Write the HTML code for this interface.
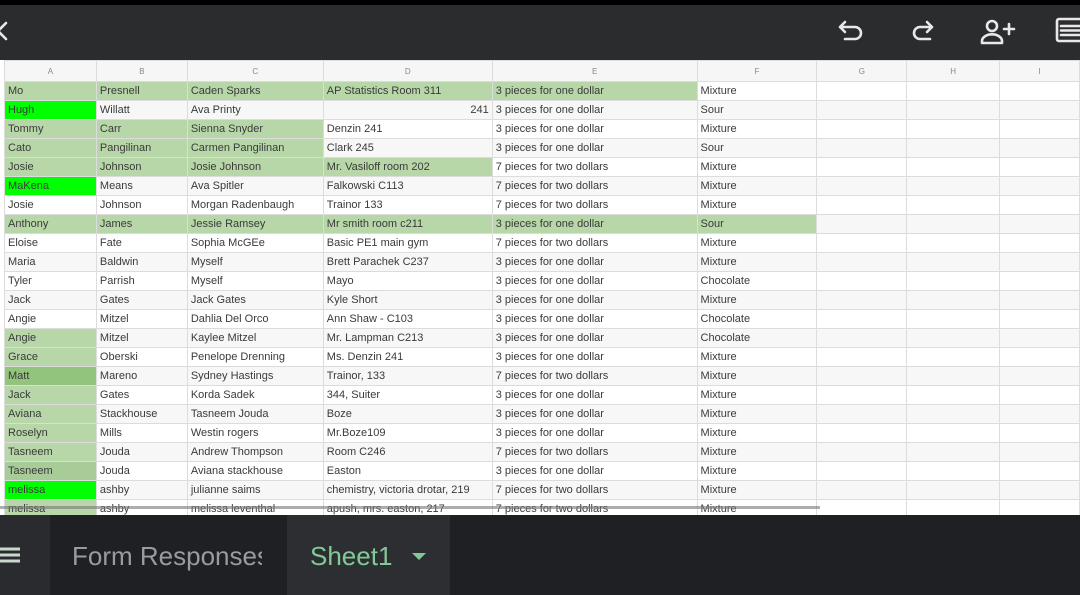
<!DOCTYPE html>
<html><head><meta charset="utf-8"><style>
*{margin:0;padding:0;box-sizing:border-box}
body{width:1080px;height:595px;overflow:hidden;background:#202124;font-family:"Liberation Sans",Arial,sans-serif;position:relative}
#top{position:absolute;left:0;top:0;width:1080px;height:5px;background:#000}
#bar{position:absolute;left:0;top:5px;width:1080px;height:55px;background:#2b2c2e}
#grid{position:absolute;left:0;top:60px;width:1080px;height:455px;background:#fff;overflow:hidden}
table{border-collapse:collapse;table-layout:fixed;position:absolute;left:4px;top:0}
td{height:19px;border:1px solid #dcdcdc;font-size:11px;color:#3a3a3a;padding:1px 3px 0;white-space:nowrap;overflow:hidden;line-height:17px}
tr.h td{height:21px;background:#f6f6f6;color:#888;font-size:8px;text-align:center}
tr:nth-child(odd):not(.h) td{background:#f7f7f7}
td.g,tr td.g{background:#b7d7a8!important}
td.b{background:#00ff00!important}
td.d{background:#93c47d!important}
#bot{position:absolute;left:0;top:515px;width:1080px;height:80px;background:#1f2023}
</style></head><body>
<div id="top"></div>
<div id="bar">
<svg width="1080" height="55" style="position:absolute;left:0;top:0" fill="none" stroke="#e8e8e8" stroke-width="2.6" stroke-linecap="round" stroke-linejoin="round">
<path d="M6 18 L-2 26 L6 34"/>
<path d="M845 17 L840 22 L845 27 M840 22 H855 a6 6 0 0 1 0 12 H845"/>
<path d="M927 17 L932 22 L927 27 M932 22 H920 a6 6 0 0 0 0 12 H930"/>
<circle cx="992" cy="21" r="5"/><path d="M982 38 v-2 a9 6 0 0 1 20 0 v2 z"/><path d="M1004 24 h10 M1009 19 v10"/>
<rect x="1057" y="14" width="26" height="22" rx="2"/><path d="M1061 21 h20 M1061 25.5 h20 M1061 30 h20"/>
</svg>
</div>
<div id="grid"><table>
<colgroup><col style="width:92px"><col style="width:91px"><col style="width:136px"><col style="width:169px"><col style="width:205px"><col style="width:120px"><col style="width:90px"><col style="width:93px"><col style="width:80px"></colgroup>
<tr class="h"><td>A</td><td>B</td><td>C</td><td>D</td><td>E</td><td>F</td><td>G</td><td>H</td><td>I</td></tr>
<tr><td class="g">Mo</td><td class="g">Presnell</td><td class="g">Caden Sparks</td><td class="g">AP Statistics Room 311</td><td class="g">3 pieces for one dollar</td><td>Mixture</td><td></td><td></td><td></td></tr>
<tr><td class="b">Hugh</td><td>Willatt</td><td>Ava Printy</td><td style="text-align:right">241</td><td>3 pieces for one dollar</td><td>Sour</td><td></td><td></td><td></td></tr>
<tr><td class="g">Tommy</td><td class="g">Carr</td><td class="g">Sienna Snyder</td><td>Denzin 241</td><td>3 pieces for one dollar</td><td>Mixture</td><td></td><td></td><td></td></tr>
<tr><td class="g">Cato</td><td class="g">Pangilinan</td><td class="g">Carmen Pangilinan</td><td>Clark 245</td><td>3 pieces for one dollar</td><td>Sour</td><td></td><td></td><td></td></tr>
<tr><td class="g">Josie</td><td class="g">Johnson</td><td class="g">Josie Johnson</td><td class="g">Mr. Vasiloff room 202</td><td>7 pieces for two dollars</td><td>Mixture</td><td></td><td></td><td></td></tr>
<tr><td class="b">MaKena</td><td>Means</td><td>Ava Spitler</td><td>Falkowski C113</td><td>7 pieces for two dollars</td><td>Mixture</td><td></td><td></td><td></td></tr>
<tr><td>Josie</td><td>Johnson</td><td>Morgan Radenbaugh</td><td>Trainor 133</td><td>7 pieces for two dollars</td><td>Mixture</td><td></td><td></td><td></td></tr>
<tr><td class="g">Anthony</td><td class="g">James</td><td class="g">Jessie Ramsey</td><td class="g">Mr smith room c211</td><td class="g">3 pieces for one dollar</td><td class="g">Sour</td><td></td><td></td><td></td></tr>
<tr><td>Eloise</td><td>Fate</td><td>Sophia McGEe</td><td>Basic PE1 main gym</td><td>7 pieces for two dollars</td><td>Mixture</td><td></td><td></td><td></td></tr>
<tr><td>Maria</td><td>Baldwin</td><td>Myself</td><td>Brett Parachek C237</td><td>3 pieces for one dollar</td><td>Mixture</td><td></td><td></td><td></td></tr>
<tr><td>Tyler</td><td>Parrish</td><td>Myself</td><td>Mayo</td><td>3 pieces for one dollar</td><td>Chocolate</td><td></td><td></td><td></td></tr>
<tr><td>Jack</td><td>Gates</td><td>Jack Gates</td><td>Kyle Short</td><td>3 pieces for one dollar</td><td>Mixture</td><td></td><td></td><td></td></tr>
<tr><td>Angie</td><td>Mitzel</td><td>Dahlia Del Orco</td><td>Ann Shaw - C103</td><td>3 pieces for one dollar</td><td>Chocolate</td><td></td><td></td><td></td></tr>
<tr><td class="g">Angie</td><td>Mitzel</td><td>Kaylee Mitzel</td><td>Mr. Lampman C213</td><td>3 pieces for one dollar</td><td>Chocolate</td><td></td><td></td><td></td></tr>
<tr><td class="g">Grace</td><td>Oberski</td><td>Penelope Drenning</td><td>Ms. Denzin 241</td><td>3 pieces for one dollar</td><td>Mixture</td><td></td><td></td><td></td></tr>
<tr><td class="d">Matt</td><td>Mareno</td><td>Sydney Hastings</td><td>Trainor, 133</td><td>7 pieces for two dollars</td><td>Mixture</td><td></td><td></td><td></td></tr>
<tr><td class="g">Jack</td><td>Gates</td><td>Korda Sadek</td><td>344, Suiter</td><td>3 pieces for one dollar</td><td>Mixture</td><td></td><td></td><td></td></tr>
<tr><td class="g">Aviana</td><td>Stackhouse</td><td>Tasneem Jouda</td><td>Boze</td><td>3 pieces for one dollar</td><td>Mixture</td><td></td><td></td><td></td></tr>
<tr><td class="g">Roselyn</td><td>Mills</td><td>Westin rogers</td><td>Mr.Boze109</td><td>3 pieces for one dollar</td><td>Mixture</td><td></td><td></td><td></td></tr>
<tr><td class="g">Tasneem</td><td>Jouda</td><td>Andrew Thompson</td><td>Room C246</td><td>7 pieces for two dollars</td><td>Mixture</td><td></td><td></td><td></td></tr>
<tr><td class="d" style="background:#a8cc98!important">Tasneem</td><td>Jouda</td><td>Aviana stackhouse</td><td>Easton</td><td>3 pieces for one dollar</td><td>Mixture</td><td></td><td></td><td></td></tr>
<tr><td class="b">melissa</td><td>ashby</td><td>julianne saims</td><td>chemistry, victoria drotar, 219</td><td>7 pieces for two dollars</td><td>Mixture</td><td></td><td></td><td></td></tr>
<tr><td class="g">melissa</td><td>ashby</td><td>melissa leventhal</td><td>apush, mrs. easton, 217</td><td>7 pieces for two dollars</td><td>Mixture</td><td></td><td></td><td></td></tr>
</table>
<div style="position:absolute;left:0;top:446px;width:820px;height:3px;background:#777;opacity:.6"></div>
</div>
<div id="bot">
<div style="position:absolute;left:0;top:0;width:50px;height:80px;background:#2a2b2e"></div>
<svg style="position:absolute;left:0;top:30px" width="22" height="22"><path d="M0 4h20M0 10h20M0 16h20" stroke="#c8d8cc" stroke-width="3"/></svg>
<div style="position:absolute;left:72px;top:26px;font-size:26px;color:#9a9b9e;white-space:nowrap;width:190px;overflow:hidden">Form Responses</div>
<div style="position:absolute;left:287px;top:0;width:163px;height:80px;background:#2d2e31"></div>
<div style="position:absolute;left:310px;top:26px;font-size:26px;color:#81c995">Sheet1</div>
<svg style="position:absolute;left:412px;top:38px" width="14" height="8"><path d="M0 0h14L7 7z" fill="#81c995"/></svg>
</div>
</body></html>
